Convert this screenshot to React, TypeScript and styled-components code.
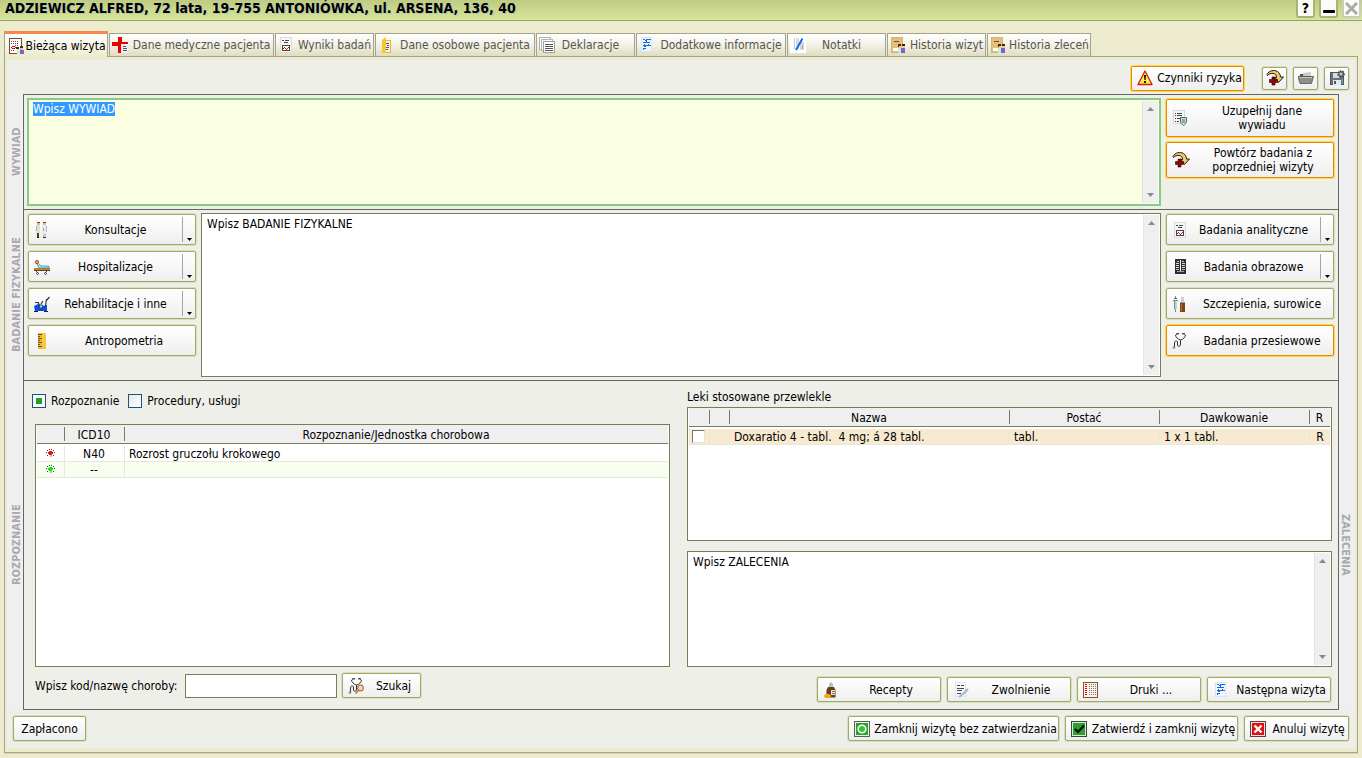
import React, { useEffect, useRef } from "react";
import styled, { createGlobalStyle, css } from "styled-components";

const c = {
  page: "#ecebcd",
  panel: "#efefea",
  strip: "#efeff0",
  line: "#66665f",
  olive: "#777d55",
  buttonEdge: "#a0aa6a",
  buttonGlow: "#d9dfbd",
  alertEdge: "#e88a00",
  alertGlow: "#ffd84a",
};

const GlobalStyle = createGlobalStyle`
  * { box-sizing: border-box; }
  body {
    margin: 0;
    background: ${c.page};
    color: #000;
    font: 12px/14px "DejaVu Sans Condensed", Tahoma, sans-serif;
  }
  button, input, textarea { font: inherit; color: inherit; }
`;

/* ---------- icons ---------- */

const Svg = styled.svg`
  display: block;
  flex: none;
`;

type Cell = [number, number, number, number, string];

const Pix = ({ cells, children }: { cells: Cell[]; children?: React.ReactNode }) => (
  <Svg width="16" height="16" viewBox="0 0 16 16" aria-hidden="true">
    <g shapeRendering="crispEdges">
      {cells.map(([x, y, w, h, f], i) => (
        <rect key={i} x={x} y={y} width={w} height={h} fill={f} />
      ))}
    </g>
    {children}
  </Svg>
);

const VisitIcon = () => (
  <Pix
    cells={[
      [0, 0, 13, 16, "#7a4a2a"], [1, 1, 11, 14, "#ffffff"],
      [2, 3, 1, 1, "#555"], [4, 3, 1, 1, "#555"], [6, 3, 1, 1, "#555"], [8, 3, 1, 1, "#555"],
      [2, 5, 1, 1, "#555"], [4, 5, 1, 1, "#555"], [6, 5, 1, 1, "#555"], [8, 5, 1, 1, "#555"],
      [6, 7, 1, 1, "#555"], [8, 7, 1, 1, "#555"],
      [3, 8, 3, 1, "#e00000"], [2, 9, 1, 1, "#e00000"], [6, 9, 1, 1, "#e00000"], [3, 10, 3, 1, "#e00000"],
      [2, 12, 1, 1, "#555"], [4, 12, 1, 1, "#555"],
      [7, 9, 3, 2, "#4a2a14"], [8, 11, 3, 5, "#c8f0c8"],
      [11, 8, 3, 2, "#4a2a14"], [11, 10, 3, 2, "#f0c090"], [11, 12, 4, 4, "#8060d0"],
    ]}
  />
);

const CrossDocIcon = () => (
  <Pix
    cells={[
      [6, 0, 4, 16, "#ee0000"], [0, 5, 16, 4, "#ee0000"],
      [9, 7, 7, 9, "#f0f0f4"], [11, 9, 3, 1, "#555"], [11, 11, 4, 1, "#555"], [11, 13, 4, 1, "#555"],
    ]}
  />
);

const ResultsIcon = () => (
  <Pix
    cells={[
      [2, 0, 12, 16, "#dcdcdc"], [3, 1, 10, 14, "#f6f6f6"],
      [4, 3, 2, 1, "#444"], [7, 3, 4, 1, "#444"], [6, 5, 4, 1, "#444"],
      [4, 8, 8, 6, "#444"], [5, 9, 6, 4, "#fff"],
      [5, 11, 1, 1, "#e00000"], [6, 10, 1, 1, "#e00000"], [7, 11, 1, 1, "#e00000"],
      [8, 12, 1, 1, "#e00000"], [9, 11, 1, 1, "#e00000"], [10, 10, 1, 1, "#e00000"],
    ]}
  />
);

const PersonalIcon = () => (
  <Pix
    cells={[
      [5, 3, 8, 13, "#f5b91c"], [7, 4, 5, 11, "#eef2fa"],
      [8, 6, 3, 1, "#555"], [9, 8, 2, 1, "#555"], [8, 10, 3, 1, "#555"], [8, 12, 2, 1, "#555"],
    ]}
  >
    <path d="M4 3 L8 0 V13 L7 16 H4 Z" fill="#fbc52c" />
  </Pix>
);

const StackIcon = () => (
  <Pix
    cells={[
      [0, 0, 12, 13, "#b4b4b4"], [1, 1, 10, 11, "#fff"],
      [2, 2, 12, 12, "#b4b4b4"], [3, 3, 10, 10, "#fff"],
      [4, 4, 12, 12, "#a0a0a0"], [5, 5, 10, 10, "#fff"],
      [6, 7, 8, 1, "#555"], [6, 9, 8, 1, "#555"], [6, 11, 8, 1, "#555"], [6, 13, 8, 1, "#555"],
    ]}
  />
);

const BlueDocIcon = () => (
  <Pix
    cells={[
      [2, 0, 11, 15, "#dce4f0"], [3, 1, 9, 13, "#f4f7fc"],
      [4, 2, 2, 1, "#0a6ae8"], [7, 2, 5, 1, "#0a6ae8"], [6, 3, 2, 1, "#0a6ae8"],
      [4, 5, 7, 1, "#0a6ae8"], [7, 4, 1, 1, "#0a6ae8"], [4, 8, 8, 1, "#0a6ae8"],
      [5, 7, 1, 1, "#0a6ae8"], [9, 7, 1, 1, "#0a6ae8"], [5, 9, 2, 1, "#0a6ae8"],
      [4, 11, 3, 1, "#0a6ae8"], [4, 12, 1, 1, "#0a6ae8"],
    ]}
  />
);

const NoteIcon = () => (
  <Pix
    cells={[
      [0, 0, 16, 16, "#fff"], [4, 1, 1, 11, "#c8c8c8"], [6, 1, 3, 11, "#dcdcdc"],
      [10, 5, 4, 8, "#d8d8d8"], [12, 8, 1, 4, "#a8a8a8"],
    ]}
  >
    <path d="M12.5 1.5 L6 13" stroke="#0a72e8" strokeWidth="2" />
  </Pix>
);

const HistoryIcon = () => (
  <Pix
    cells={[
      [1, 0, 12, 16, "#d8b46a"], [2, 1, 10, 14, "#e2c07c"], [4, 4, 5, 1, "#6a5430"],
      [3, 11, 8, 3, "#fff"], [8, 7, 3, 3, "#4a2a14"], [9, 9, 3, 2, "#f0c8a0"],
      [12, 7, 3, 2, "#3a2010"], [12, 9, 3, 2, "#f0c8a0"],
      [8, 11, 3, 5, "#c8f0c8"], [11, 11, 4, 5, "#8060d0"],
    ]}
  />
);

const WarningIcon = () => (
  <Pix cells={[]}>
    <path d="M8 1 L15 14.5 H1 Z" fill="#ffee3a" stroke="#d81818" strokeWidth="1.3" strokeLinejoin="round" />
    <path d="M7 5 H9 L8.6 10 H7.4 Z" fill="#111" />
    <rect x="7" y="11" width="2" height="2" fill="#111" />
  </Pix>
);

const RepeatIcon = () => (
  <Svg width="18" height="16" viewBox="0 0 18 16" aria-hidden="true">
    <path
      d="M1 4.5 C3 .5 8 -.5 11.500 1.500 C13.500 2.800 14.500 5 14.500 7 H17.500 L12.500 12.500 L9 7.500 H10.500 C10.500 5 9.500 3.800 7 3.500 C4.500 3.300 3 4 1.500 5.500 Z"
      fill="#e9c773"
      stroke="#2a1c08"
      strokeWidth="1"
      strokeLinejoin="round"
    />
    <path d="M6 7 H9 V9.500 H11.500 V12.500 H9 V15 H6 V12.500 H3.500 V9.500 H6 Z" fill="#8a0808" stroke="#2a0000" strokeWidth=".6" />
  </Svg>
);

const FolderIcon = () => (
  <Pix cells={[]}>
    <path d="M2 4 H6 L7 3 H13 V13 H2 Z" fill="#50554d" />
    <path d="M5 3 L13 2 V6 H5 Z" fill="#c9cdc4" />
    <path d="M0 6.500 H15.500 L13.500 13.500 H2 Z" fill="#8b9186" stroke="#4f544c" strokeWidth=".8" />
    <path d="M1.500 7.500 H14" stroke="#c4c8c0" strokeWidth="1" />
  </Pix>
);

const SaveIcon = () => (
  <Pix
    cells={[
      [1, 2, 14, 13, "#4c5660"], [2, 3, 12, 11, "#66727e"], [4, 3, 7, 5, "#d4dce4"],
      [4, 10, 8, 5, "#e4e8ec"], [5, 11, 2, 3, "#4c5660"], [13, 9, 1, 5, "#58a8d8"],
    ]}
  >
    <circle cx="12" cy="4" r="3" fill="#777" stroke="#444" strokeWidth="1.500" strokeDasharray="1.500 1" />
    <circle cx="12" cy="4" r="1" fill="#eee" />
  </Pix>
);

const FormShieldIcon = () => (
  <Pix
    cells={[
      [1, 0, 12, 14, "#d8d8d8"], [2, 1, 10, 12, "#f4f4f4"],
      [3, 3, 1, 1, "#444"], [5, 3, 5, 1, "#444"], [3, 5, 1, 1, "#444"], [5, 5, 5, 1, "#444"],
      [3, 8, 1, 1, "#444"], [5, 8, 3, 1, "#444"], [3, 11, 1, 1, "#444"], [5, 11, 2, 1, "#444"],
    ]}
  >
    <path d="M8.500 7.500 H14.500 V11 C14.500 13 13 14.500 11.500 15.500 C10 14.500 8.500 13 8.500 11 Z" fill="#f2e67a" stroke="#2468b8" strokeWidth="1" />
    <path d="M10 10 H13 M10 12 H13" stroke="#2468b8" strokeWidth="1" />
  </Pix>
);

const ConsultIcon = () => (
  <Pix
    cells={[
      [3, 0, 3, 1, "#7a4418"], [3, 1, 3, 2, "#f0b888"], [2, 3, 4, 8, "#d4e8d8"], [2, 4, 1, 5, "#9cc0a8"],
      [3, 11, 2, 4, "#5a3420"], [3, 15, 2, 1, "#111"],
      [9, 0, 3, 1, "#7a4418"], [9, 1, 3, 2, "#f0b888"], [8, 3, 4, 9, "#e4ecf6"], [12, 4, 1, 6, "#a8b8d0"],
      [9, 6, 1, 3, "#e89070"], [9, 12, 3, 3, "#c8c8c8"], [9, 15, 3, 1, "#333"],
    ]}
  />
);

const BedIcon = () => (
  <Pix
    cells={[
      [0, 9, 16, 2, "#c08028"], [0, 11, 16, 1, "#6e4610"], [3, 13, 1, 1, "#333"], [11, 13, 1, 1, "#333"],
    ]}
  >
    <path d="M2 3 L7 7 H15 V9 H5 Z" fill="#aee6d6" stroke="#2a9ab8" strokeWidth=".8" />
    <circle cx="3" cy="3" r="1.700" fill="#e8a060" stroke="#7a4418" strokeWidth=".7" />
    <path d="M2 12 L4 14 M13 12 L11 14" stroke="#444" strokeWidth="1" />
    <circle cx="3.500" cy="14.500" r="1" fill="#fff" stroke="#222" strokeWidth=".8" />
    <circle cx="11.500" cy="14.500" r="1" fill="#fff" stroke="#222" strokeWidth=".8" />
  </Pix>
);

const BikeIcon = () => (
  <Pix cells={[[0, 15, 4, 1, "#223"], [10, 15, 4, 1, "#223"]]}>
    <path d="M0 10 L4 8 L8 10 L13 9 L13 15 H1 Z" fill="#0a50e0" />
    <path d="M1 6.500 H5 M4 6.500 L6 10 M7 8 L9 5 M11.500 10 L12.500 3 M12 5 L15.500 1" stroke="#333a48" strokeWidth="1.200" fill="none" />
    <circle cx="7" cy="10.500" r="1.800" fill="#a8c8ff" stroke="#123" strokeWidth=".8" />
  </Pix>
);

const RulerIcon = () => (
  <Pix
    cells={[
      [4, 0, 8, 16, "#f4b91e"], [8, 0, 4, 16, "#fcc53c"],
      [4, 1, 4, 1, "#555"], [4, 3, 2, 1, "#555"], [4, 5, 4, 1, "#555"], [4, 7, 2, 1, "#555"],
      [4, 9, 4, 1, "#555"], [4, 11, 2, 1, "#555"], [4, 13, 4, 1, "#555"],
    ]}
  />
);

const XrayIcon = () => (
  <Pix
    cells={[
      [3, 0, 11, 15, "#303030"], [8, 1, 1, 12, "#f4f4f4"],
      [5, 2, 2, 1, "#c8c8c8"], [10, 2, 2, 1, "#c8c8c8"], [4, 4, 3, 1, "#d8d8d8"], [10, 4, 3, 1, "#d8d8d8"],
      [4, 6, 3, 1, "#d8d8d8"], [10, 6, 3, 1, "#d8d8d8"], [4, 8, 3, 1, "#d8d8d8"], [10, 8, 3, 1, "#d8d8d8"],
      [4, 10, 3, 1, "#b8b8b8"], [10, 10, 3, 1, "#b8b8b8"], [5, 12, 7, 1, "#a0a0a0"],
    ]}
  />
);

const VaccineIcon = () => (
  <Pix
    cells={[
      [3, 0, 1, 2, "#889"], [2, 2, 3, 1, "#556"], [2, 4, 3, 9, "#b8d8d8"], [2, 5, 1, 8, "#6a8a90"],
      [3, 13, 1, 3, "#889"], [1, 4, 5, 1, "#6a8a90"],
      [9, 1, 3, 5, "#d0d0d0"], [8, 6, 5, 1, "#a0a0a0"], [8, 7, 5, 9, "#7a4618"], [9, 8, 1, 7, "#b07840"],
    ]}
  />
);

const StethoscopePath = () => (
  <>
    <path d="M4 1.500 C5 .5 6 .5 7 1 M10 1 C11 .5 12 .5 13 1.500" stroke="#333" fill="none" strokeWidth="1.200" />
    <path
      d="M3.500 2 C3.500 4 6 6.500 8.500 7 C11 6.500 13.500 4 13.500 2 M8.500 7 V11 C8.500 14 5.500 14 5.500 12 V9 C5.500 7.500 2.500 7.500 2.500 10 V14"
      stroke="#333"
      fill="none"
      strokeWidth="1"
    />
    <circle cx="2" cy="14.500" r="1" fill="#bbb" stroke="#666" strokeWidth=".6" />
  </>
);

const StethoscopeIcon = () => (
  <Pix cells={[]}>
    <StethoscopePath />
  </Pix>
);

const SearchIcon = () => (
  <Pix cells={[]}>
    <StethoscopePath />
    <circle cx="12.500" cy="10" r="2.800" fill="#b4ecff" stroke="#d86818" strokeWidth="1.200" />
    <path d="M10.500 12.500 L7.500 15.500" stroke="#d86818" strokeWidth="1.500" />
  </Pix>
);

const BottleIcon = () => (
  <Pix cells={[]}>
    <path d="M6 2 L8 0 L10 2 V5 H6 Z" fill="#bbb" />
    <path d="M5 5 H11 L12.500 8 V15.500 H3.500 V8 Z" fill="#6b3e16" />
    <rect x="8" y="8" width="4" height="5" fill="#f0e8dc" />
    <path d="M9 9.500 H12 M9 11.500 H12" stroke="#555" strokeWidth=".8" />
    <ellipse cx="4.500" cy="14" rx="3.500" ry="2" fill="#f8a818" />
  </Pix>
);

const NoteWrenchIcon = () => (
  <Pix
    cells={[
      [2, 0, 11, 15, "#dfe4ee"], [3, 1, 9, 13, "#f8f9fc"],
      [4, 3, 3, 1, "#444"], [8, 3, 3, 1, "#444"], [4, 6, 7, 1, "#444"], [4, 8, 5, 1, "#444"], [4, 11, 4, 1, "#444"],
    ]}
  >
    <path d="M15 7 L13 9 L12 8 M13 9.500 L6 15" stroke="#a4b4c8" strokeWidth="2" fill="none" />
  </Pix>
);

const FormsIcon = () => (
  <Pix
    cells={[
      [0, 0, 15, 16, "#8a5230"], [1, 1, 13, 14, "#fbf3ea"],
      ...[2, 4, 6, 8, 10, 12].flatMap((y): Cell[] => [
        [2, y, 2, 1, "#e80000"], [6, y, 1, 1, "#777"], [8, y, 1, 1, "#777"], [10, y, 1, 1, "#777"], [12, y, 1, 1, "#777"],
      ]),
    ]}
  />
);

const GreenRingIcon = () => (
  <Pix cells={[[0, 0, 16, 16, "#5a6058"], [1, 1, 14, 14, "#e8f4e8"], [2, 2, 12, 12, "#28a428"]]}>
    <circle cx="8" cy="8" r="3.800" fill="#38c038" stroke="#fff" strokeWidth="1.600" />
  </Pix>
);

const GreenCheckIcon = () => (
  <Pix cells={[[0, 0, 16, 16, "#3c443c"], [1, 1, 14, 14, "#d8ecd8"], [2, 2, 12, 12, "#28a030"]]}>
    <path d="M4 8 L7 11 L13 4.500" stroke="#000" strokeWidth="2.200" fill="none" />
  </Pix>
);

const RedCrossIcon = () => (
  <Pix cells={[[0, 0, 16, 16, "#5c4040"], [1, 1, 14, 14, "#f8e0e0"], [2, 2, 12, 12, "#e01010"]]}>
    <path d="M4.500 4.500 L11.500 11.500 M11.500 4.500 L4.500 11.500" stroke="#fff" strokeWidth="2.400" />
  </Pix>
);

const Bulb = ({ color, dark }: { color: string; dark: string }) => (
  <Svg width="9" height="9" viewBox="0 0 9 9" shapeRendering="crispEdges" aria-hidden="true">
    <rect x="3" y="2" width="3" height="4" fill={color} />
    <rect x="2" y="3" width="5" height="2" fill={color} />
    <rect x="4" y="6" width="2" height="2" fill="#bbb" />
    {[[0, 3], [8, 3], [1, 1], [7, 1], [3, 0], [5, 0], [1, 6], [7, 6]].map(([x, y]) => (
      <rect key={`${x}-${y}`} x={x} y={y} width="1" height="1" fill={dark} />
    ))}
  </Svg>
);

const Triangle = ({ up, fill = "#8a8a8a" }: { up?: boolean; fill?: string }) => (
  <Svg width="7" height="4" viewBox="0 0 7 4" aria-hidden="true">
    <path d={up ? "M0 4 L3.500 0 L7 4 Z" : "M0 0 H7 L3.500 4 Z"} fill={fill} />
  </Svg>
);

/* ---------- window frame ---------- */

const Window = styled.div`
  display: flex;
  flex-direction: column;
  min-height: 100vh;
`;

const TitleBar = styled.header`
  display: flex;
  justify-content: space-between;
  height: 21px;
  padding: 0 1px 0 5px;
  background: linear-gradient(#bfca82, #d7e69a);
  border-bottom: 1px solid #98a070;
`;

const Title = styled.h1`
  margin: 0;
  font-size: 14px;
  line-height: 16px;
  font-weight: bold;
  white-space: nowrap;
  text-shadow: 1px 1px 0 #b4c8b8;
`;

const WindowButtons = styled.div`
  display: flex;
  gap: 4px;
`;

const WindowButton = styled.button`
  display: flex;
  align-items: center;
  justify-content: center;
  width: 19px;
  height: 18px;
  padding: 0;
  border: 2px solid #a5b674;
  border-top-width: 0;
  border-radius: 0 0 3px 3px;
  background: #fbfbf8;
  font-size: 14px;
  font-weight: bold;
  &:disabled {
    border-color: #c9ccb8;
  }
`;

const TabList = styled.div`
  display: flex;
  align-items: flex-end;
  gap: 1px;
  height: 35px;
  padding: 0 4px;
`;

const Tab = styled.button<{ $active?: boolean; $width: number; $roomy?: boolean }>`
  display: flex;
  align-items: center;
  flex: 0 1 ${(p) => p.$width}px;
  height: 23px;
  padding: 0 1px 0 2px;
  border: 1px solid #a5a295;
  border-bottom: 0;
  background: linear-gradient(#ffffff, #f2f1e4 50%, #dfddc0);
  color: #55554f;
  white-space: nowrap;
  span {
    flex: 1;
    text-align: center;
    padding-left: 3px;
    padding-right: ${(p) => (p.$roomy ? 10 : 0)}px;
  }
  ${(p) =>
    p.$active &&
    css`
      position: relative;
      height: 26px;
      margin-bottom: -1px;
      padding-left: 4px;
      border-top: 3px solid #f58a4c;
      background: linear-gradient(#ffffff, ${c.page});
      color: #000;
      span {
        padding-left: 0;
      }
    `}
`;

const Frame = styled.main`
  display: flex;
  flex-direction: column;
  flex: 1;
  margin: 0 4px 5px;
  padding: 3px 2px 4px;
  border: 1px solid #a5a295;
  box-shadow: 0 1px 0 #d6d4ba;
`;

const Panel = styled.div`
  display: flex;
  flex-direction: column;
  flex: 1;
  background: ${c.panel};
`;

/* ---------- buttons ---------- */

const surface = css<{ $alert?: boolean }>`
  border: 1px solid ${(p) => (p.$alert ? c.alertEdge : c.buttonEdge)};
  border-radius: 2px;
  box-shadow: 0 0 0 1px ${(p) => (p.$alert ? c.alertGlow : c.buttonGlow)};
  background: linear-gradient(#ffffff, #f7f7f7 50%, #eeeeee);
`;

const Button = styled.button<{ $alert?: boolean; $height?: number; $width?: number }>`
  ${surface}
  display: flex;
  align-items: center;
  height: ${(p) => p.$height ?? 25}px;
  width: ${(p) => (p.$width ? `${p.$width}px` : "auto")};
  padding: 0 1px 0 5px;
`;

const ButtonLabel = styled.span<{ $wrap?: boolean }>`
  flex: 1;
  padding: ${(p) => (p.$wrap ? "0 12px 0 16px" : "0 0 0 4px")};
  text-align: center;
  white-space: ${(p) => (p.$wrap ? "normal" : "nowrap")};
`;

const PlainButton = styled(Button)`
  justify-content: center;
  padding: 0;
`;

const SplitFrame = styled.div<{ $alert?: boolean }>`
  ${surface}
  display: flex;
  height: 31px;
`;

const SplitMain = styled.button`
  display: flex;
  align-items: center;
  flex: 1;
  padding: 0 5px;
  border: 0;
  background: none;
`;

const SplitMenu = styled.button`
  display: flex;
  align-items: flex-end;
  justify-content: center;
  width: 13px;
  margin: 2px 0;
  padding: 0 0 1px;
  border: 0;
  border-left: 1px solid #a4a4a4;
  background: none;
`;

type ActionProps = {
  icon: React.ReactNode;
  label: string;
  alert?: boolean;
  height?: number;
  width?: number;
  wrap?: boolean;
};

const Action = ({ icon, label, alert, height, width, wrap }: ActionProps) => (
  <Button type="button" $alert={alert} $height={height} $width={width}>
    {icon}
    <ButtonLabel $wrap={wrap}>{label}</ButtonLabel>
  </Button>
);

const SplitAction = ({ icon, label }: ActionProps) => (
  <SplitFrame>
    <SplitMain type="button">
      {icon}
      <ButtonLabel>{label}</ButtonLabel>
    </SplitMain>
    <SplitMenu type="button" aria-label={`${label} – więcej`}>
      <Svg width="5" height="3" viewBox="0 0 5 3" aria-hidden="true">
        <path d="M0 0 H5 L2.500 3 Z" fill="#000" />
      </Svg>
    </SplitMenu>
  </SplitFrame>
);

const Toolbar = styled.div`
  display: flex;
  align-items: center;
  justify-content: flex-end;
  gap: 6px;
  height: 34px;
  padding: 2px 6px 0 0;
`;

const RiskSlot = styled.div`
  margin-right: 12px;
`;

/* ---------- text areas ---------- */

const MemoFrame = styled.div<{ $focus?: boolean }>`
  display: flex;
  flex: 1;
  min-height: 0;
  border: ${(p) => (p.$focus ? "2px solid #85cc85" : `1px solid ${c.olive}`)};
  background: ${(p) => (p.$focus ? "#f9ffe0" : "#ffffff")};
`;

const MemoText = styled.textarea<{ $focus?: boolean }>`
  flex: 1;
  min-width: 0;
  padding: ${(p) => (p.$focus ? "2px 4px" : "3px 5px")};
  border: 0;
  outline: 0;
  resize: none;
  background: transparent;
  scrollbar-width: none;
  &::selection {
    background: #3399ff;
    color: #ffffff;
  }
`;

const ScrollTrack = styled.div`
  display: flex;
  flex-direction: column;
  justify-content: space-between;
  width: 16px;
  margin: 1px;
  background: #efefef;
  border-left: 1px solid #e2e2e2;
`;

const ScrollArrow = styled.button`
  display: flex;
  align-items: center;
  justify-content: center;
  height: 16px;
  padding: 0;
  border: 0;
  background: none;
`;

const Memo = ({ text, label, focus }: { text: string; label: string; focus?: boolean }) => {
  const ref = useRef<HTMLTextAreaElement>(null);
  useEffect(() => {
    if (focus && ref.current) {
      ref.current.focus();
      ref.current.select();
    }
  }, [focus]);
  return (
    <MemoFrame $focus={focus}>
      <MemoText ref={ref} $focus={focus} aria-label={label} defaultValue={text} spellCheck={false} />
      <ScrollTrack>
        <ScrollArrow type="button" tabIndex={-1} aria-label="W górę">
          <Triangle up />
        </ScrollArrow>
        <ScrollArrow type="button" tabIndex={-1} aria-label="W dół">
          <Triangle />
        </ScrollArrow>
      </ScrollTrack>
    </MemoFrame>
  );
};

/* ---------- workspace ---------- */

const Workspace = styled.div`
  display: grid;
  grid-template-columns: 16px minmax(0, 1fr) 16px;
  grid-template-rows: 115px 171px minmax(329px, 1fr);
  flex: 1;
`;

const SideLabel = styled.div<{ $right?: boolean }>`
  display: flex;
  align-items: center;
  justify-content: center;
  background: ${c.strip};
  color: #a8a8ae;
  font-size: 11px;
  line-height: 12px;
  font-weight: bold;
  white-space: nowrap;
  writing-mode: vertical-rl;
  padding-right: ${(p) => (p.$right ? 4 : 3)}px;
  ${(p) => !p.$right && "transform: rotate(180deg);"}
`;

const Section = styled.section`
  display: flex;
  gap: 5px;
  padding: 3px 4px 3px 3px;
  border: 1px solid ${c.line};
  border-bottom: 0;
`;

const ExamSection = styled(Section)`
  padding-left: 4px;
`;

const ButtonColumn = styled.div<{ $gap: number }>`
  display: flex;
  flex-direction: column;
  gap: ${(p) => p.$gap}px;
  width: 168px;
  padding-top: 1px;
`;

const DiagnosisSection = styled.section`
  display: grid;
  grid-template-columns: minmax(0, 638fr) minmax(0, 645fr);
  gap: 17px;
  padding: 0 6px 0 8px;
  border: 1px solid ${c.line};
`;

const Column = styled.div`
  display: flex;
  flex-direction: column;
  min-height: 0;
`;

const CheckRow = styled.div`
  display: flex;
  align-items: center;
  gap: 9px;
  height: 43px;
  padding-bottom: 3px;
`;

const CheckLabel = styled.label`
  display: flex;
  align-items: center;
  gap: 5px;
`;

const CheckBox = styled.input`
  appearance: none;
  width: 14px;
  height: 14px;
  margin: 0;
  border: 1px solid #1c5180;
  background: linear-gradient(135deg, #e6e6e2, #ffffff);
  &:checked {
    background: linear-gradient(#21a121, #21a121) center / 6px 6px no-repeat, #f8f8f6;
  }
`;

const RowCheck = styled.input`
  appearance: none;
  display: block;
  width: 13px;
  height: 13px;
  margin: 0 0 0 3px;
  border: 1px solid #e4e0d4;
  border-top-color: #777;
  border-left-color: #777;
  background: #ffffff;
`;

const GridBox = styled.div<{ $grow: number; $inset?: boolean }>`
  flex: ${(p) => p.$grow} 1 0;
  margin-left: ${(p) => (p.$inset ? 3 : 0)}px;
  padding: 0 1px;
  border: 1px solid ${c.olive};
  background: #ffffff;
  overflow: hidden;
`;

const Table = styled.table`
  width: 100%;
  table-layout: fixed;
  border-collapse: separate;
  border-spacing: 0;
  white-space: pre;
  th {
    height: 19px;
    padding: 1px 0 0;
    border-bottom: 1px solid ${c.olive};
    background: #efefef;
    font-weight: normal;
  }
  th + th {
    background: linear-gradient(${c.olive}, ${c.olive}) left center / 1px 14px no-repeat, #efefef;
  }
  tbody::before {
    content: "";
    display: block;
    height: 2px;
  }
  td {
    height: 16px;
    padding: 0 5px 0 4px;
    border-bottom: 1px solid #e9e6da;
  }
  td + td {
    border-left: 1px solid #e9e6da;
  }
`;

const Row = styled.tr<{ $tone?: string }>`
  background: ${(p) => p.$tone ?? "#ffffff"};
`;

const Cell = styled.td<{ $center?: boolean; $tight?: boolean }>`
  && {
    text-align: ${(p) => (p.$center ? "center" : "left")};
    ${(p) => p.$tight && "padding: 0;"}
  }
  svg {
    margin: 0 auto;
  }
`;

const Col = styled.col<{ $w?: number }>`
  width: ${(p) => (p.$w ? `${p.$w}px` : "auto")};
`;

const SearchForm = styled.form`
  display: flex;
  align-items: center;
  gap: 5px;
  padding: 6px 0 11px 3px;
  label {
    min-width: 145px;
    white-space: nowrap;
  }
`;

const CodeInput = styled.input`
  width: 152px;
  height: 24px;
  padding: 0 4px;
  border: 1px solid ${c.olive};
  background: #ffffff;
`;

const Caption = styled.h2`
  margin: 0;
  padding-top: 9px;
  height: 26px;
  font-size: 12px;
  font-weight: normal;
`;

const MemoSlot = styled.div`
  display: flex;
  flex: 117 1 0;
  margin-top: 10px;
`;

const RightActions = styled.div`
  display: flex;
  justify-content: flex-end;
  gap: 6px;
  padding: 10px 1px 7px 0;
`;

const Footer = styled.footer`
  display: flex;
  gap: 6px;
  padding: 6px 6px 7px;
`;

const PaidSlot = styled.div`
  flex: 1;
`;

const tabs = [
  { label: "Bieżąca wizyta", width: 104, icon: <VisitIcon />, active: true },
  { label: "Dane medyczne pacjenta", width: 165, icon: <CrossDocIcon /> },
  { label: "Wyniki badań", width: 99, icon: <ResultsIcon /> },
  { label: "Dane osobowe pacjenta", width: 160, icon: <PersonalIcon /> },
  { label: "Deklaracje", width: 99, icon: <StackIcon />, roomy: true },
  { label: "Dodatkowe informacje", width: 150, icon: <BlueDocIcon /> },
  { label: "Notatki", width: 99, icon: <NoteIcon />, roomy: true },
  { label: "Historia wizyt", width: 99, icon: <HistoryIcon /> },
  { label: "Historia zleceń", width: 104, icon: <HistoryIcon /> },
];

export default function App() {
  return (
    <Window>
      <GlobalStyle />
      <TitleBar>
        <Title>ADZIEWICZ ALFRED, 72 lata, 19-755 ANTONIÓWKA, ul. ARSENA, 136, 40</Title>
        <WindowButtons>
          <WindowButton type="button" aria-label="Pomoc">?</WindowButton>
          <WindowButton type="button" aria-label="Minimalizuj">
            <Svg width="12" height="12" viewBox="0 0 12 12"><rect y="8" width="12" height="3" rx="1" fill="#000" /></Svg>
          </WindowButton>
          <WindowButton type="button" aria-label="Zamknij" disabled>
            <Svg width="13" height="13" viewBox="0 0 13 13"><path d="M1 1 L12 12 M12 1 L1 12" stroke="#aaa" strokeWidth="3" /></Svg>
          </WindowButton>
        </WindowButtons>
      </TitleBar>

      <TabList role="tablist">
        {tabs.map((t) => (
          <Tab key={t.label} type="button" role="tab" aria-selected={!!t.active} $active={t.active} $width={t.width} $roomy={t.roomy}>
            {t.icon}
            <span>{t.label}</span>
          </Tab>
        ))}
      </TabList>

      <Frame>
        <Panel>
          <Toolbar>
            <RiskSlot>
              <Action icon={<WarningIcon />} label="Czynniki ryzyka" alert width={113} />
            </RiskSlot>
            <PlainButton type="button" $width={25} $height={23} aria-label="Powtórz"><RepeatIcon /></PlainButton>
            <PlainButton type="button" $width={25} $height={23} aria-label="Otwórz"><FolderIcon /></PlainButton>
            <PlainButton type="button" $width={25} $height={23} aria-label="Zapisz"><SaveIcon /></PlainButton>
          </Toolbar>

          <Workspace>
            <SideLabel>WYWIAD</SideLabel>
            <Section>
              <Memo text="Wpisz WYWIAD" label="Wywiad" focus />
              <ButtonColumn $gap={5}>
                <Action icon={<FormShieldIcon />} label="Uzupełnij dane wywiadu" alert height={38} wrap />
                <Action icon={<RepeatIcon />} label="Powtórz badania z poprzedniej wizyty" alert height={36} wrap />
              </ButtonColumn>
            </Section>
            <SideLabel $right />

            <SideLabel>BADANIE FIZYKALNE</SideLabel>
            <ExamSection>
              <ButtonColumn $gap={6}>
                <SplitAction icon={<ConsultIcon />} label="Konsultacje" />
                <SplitAction icon={<BedIcon />} label="Hospitalizacje" />
                <SplitAction icon={<BikeIcon />} label="Rehabilitacje i inne" />
                <Action icon={<RulerIcon />} label="Antropometria" height={31} />
              </ButtonColumn>
              <Memo text="Wpisz BADANIE FIZYKALNE" label="Badanie fizykalne" />
              <ButtonColumn $gap={6}>
                <SplitAction icon={<ResultsIcon />} label="Badania analityczne" />
                <SplitAction icon={<XrayIcon />} label="Badania obrazowe" />
                <Action icon={<VaccineIcon />} label="Szczepienia, surowice" height={31} />
                <Action icon={<StethoscopeIcon />} label="Badania przesiewowe" alert height={31} />
              </ButtonColumn>
            </ExamSection>
            <SideLabel $right />

            <SideLabel>ROZPOZNANIE</SideLabel>
            <DiagnosisSection>
              <Column>
                <CheckRow>
                  <CheckLabel><CheckBox type="checkbox" defaultChecked />Rozpoznanie</CheckLabel>
                  <CheckLabel><CheckBox type="checkbox" />Procedury, usługi</CheckLabel>
                </CheckRow>
                <GridBox $grow={1} $inset>
                  <Table>
                    <colgroup><Col $w={27} /><Col $w={60} /><Col /></colgroup>
                    <thead>
                      <tr><th /><th>ICD10</th><th>Rozpoznanie/Jednostka chorobowa</th></tr>
                    </thead>
                    <tbody>
                      <Row>
                        <Cell $tight><Bulb color="#f01010" dark="#a02020" /></Cell>
                        <Cell $center>N40</Cell>
                        <Cell>Rozrost gruczołu krokowego</Cell>
                      </Row>
                      <Row $tone="#f8fff0">
                        <Cell $tight><Bulb color="#10e810" dark="#107010" /></Cell>
                        <Cell $center>--</Cell>
                        <Cell />
                      </Row>
                    </tbody>
                  </Table>
                </GridBox>
                <SearchForm onSubmit={(e) => e.preventDefault()}>
                  <label htmlFor="code">Wpisz kod/nazwę choroby:</label>
                  <CodeInput id="code" type="text" />
                  <Action icon={<SearchIcon />} label="Szukaj" width={79} />
                </SearchForm>
              </Column>

              <Column>
                <Caption>Leki stosowane przewlekle</Caption>
                <GridBox $grow={133}>
                  <Table>
                    <colgroup><Col $w={20} /><Col $w={20} /><Col /><Col $w={150} /><Col $w={150} /><Col $w={21} /></colgroup>
                    <thead>
                      <tr><th /><th /><th>Nazwa</th><th>Postać</th><th>Dawkowanie</th><th>R</th></tr>
                    </thead>
                    <tbody>
                      <Row $tone="#f7ead0">
                        <Cell $tight><RowCheck type="checkbox" aria-label="Doxaratio 4" /></Cell>
                        <Cell />
                        <Cell>{"Doxaratio 4 - tabl.  4 mg; á 28 tabl."}</Cell>
                        <Cell>tabl.</Cell>
                        <Cell>1 x 1 tabl.</Cell>
                        <Cell $center $tight>R</Cell>
                      </Row>
                    </tbody>
                  </Table>
                </GridBox>
                <MemoSlot>
                  <Memo text="Wpisz ZALECENIA" label="Zalecenia" />
                </MemoSlot>
                <RightActions>
                  <Action icon={<BottleIcon />} label="Recepty" width={124} />
                  <Action icon={<NoteWrenchIcon />} label="Zwolnienie" width={124} />
                  <Action icon={<FormsIcon />} label="Druki ..." width={124} />
                  <Action icon={<BlueDocIcon />} label="Następna wizyta" width={124} />
                </RightActions>
              </Column>
            </DiagnosisSection>
            <SideLabel $right>ZALECENIA</SideLabel>
          </Workspace>

          <Footer>
            <PaidSlot>
              <PlainButton type="button" $width={73}>Zapłacono</PlainButton>
            </PaidSlot>
            <Action icon={<GreenRingIcon />} label="Zamknij wizytę bez zatwierdzania" width={211} />
            <Action icon={<GreenCheckIcon />} label="Zatwierdź i zamknij wizytę" width={173} />
            <Action icon={<RedCrossIcon />} label="Anuluj wizytę" width={105} />
          </Footer>
        </Panel>
      </Frame>
    </Window>
  );
}
